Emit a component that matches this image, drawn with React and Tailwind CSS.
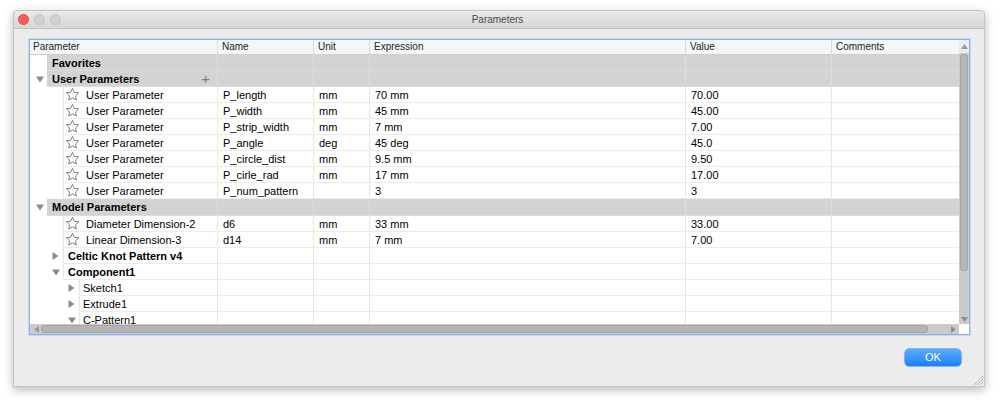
import React from "react";

const font = "font-['Liberation_Sans',Arial,sans-serif]";

const params = [
  ["User Parameter", "P_length", "mm", "70 mm", "70.00"],
  ["User Parameter", "P_width", "mm", "45 mm", "45.00"],
  ["User Parameter", "P_strip_width", "mm", "7 mm", "7.00"],
  ["User Parameter", "P_angle", "deg", "45 deg", "45.0"],
  ["User Parameter", "P_circle_dist", "mm", "9.5 mm", "9.50"],
  ["User Parameter", "P_cirle_rad", "mm", "17 mm", "17.00"],
  ["User Parameter", "P_num_pattern", "", "3", "3"],
];

const models = [
  ["Diameter Dimension-2", "d6", "mm", "33 mm", "33.00"],
  ["Linear Dimension-3", "d14", "mm", "7 mm", "7.00"],
];

function Star() {
  return (
    <svg width="15" height="15" viewBox="0 0 24 24" className="shrink-0">
      <path
        d="M12 2.2l2.95 6.3 6.85.85-5.05 4.7 1.35 6.8L12 17.45l-6.1 3.4 1.35-6.8-5.05-4.7 6.85-.85z"
        fill="#fff"
        stroke="#7c7c7c"
        strokeWidth="1.6"
        strokeLinejoin="round"
      />
    </svg>
  );
}

function Tri({ dir }) {
  return dir === "down" ? (
    <svg width="8" height="7" viewBox="0 0 8 7">
      <polygon points="0,0.5 8,0.5 4,6.5" fill="#8b8b8b" />
    </svg>
  ) : (
    <svg width="7" height="8" viewBox="0 0 7 8">
      <polygon points="0.5,0 6.5,4 0.5,8" fill="#8b8b8b" />
    </svg>
  );
}

// the five columns after "Parameter"
function Rest({ gray, cells = ["", "", "", "", ""] }) {
  const widths = ["w-[96px]", "w-[56px]", "w-[316px]", "w-[146px]", "w-[128px]"];
  return widths.map((w, i) => (
    <div
      key={i}
      className={`${w} shrink-0 border-l pl-[5px] ${
        gray ? "border-[#dedede] border-b-[#dcdcdc] bg-[#d3d3d3]" : "border-[#e6e6e6] border-b-[#ececec]"
      } border-b`}
    >
      {cells[i]}
    </div>
  ));
}

function GroupRow({ label, open, plus, tall }) {
  return (
    <div className={`flex ${tall ? "h-[17px] leading-[17px]" : "h-[16px] leading-[16px]"}`}>
      <div className="flex w-[187px] shrink-0">
        <div className="flex w-[17px] shrink-0 items-center pl-[6px]">{open && <Tri dir="down" />}</div>
        <div className="flex flex-1 items-center justify-between border-b border-[#dcdcdc] bg-[#d3d3d3] pl-[5px] pr-[7px] font-bold">
          <span>{label}</span>
          {plus && <span className="text-[15px] font-normal text-[#7a7a7a]">+</span>}
        </div>
      </div>
      <Rest gray />
    </div>
  );
}

function ParamRow({ row }) {
  return (
    <div className="flex h-[16px] leading-[16px]">
      <div className="flex w-[187px] shrink-0">
        <div className="w-[33px] shrink-0" />
        <div className="flex flex-1 items-center gap-[6px] border-b border-l border-[#e6e6e6] border-b-[#ececec] pl-[1px]">
          <Star />
          <span>{row[0]}</span>
        </div>
      </div>
      <Rest cells={row.slice(1)} />
    </div>
  );
}

function TreeRow({ label, level, dir, bold }) {
  const indent = level === 1 ? "w-[33px] pl-[22px]" : "w-[49px] pl-[38px]";
  return (
    <div className="flex h-[16px] leading-[16px]">
      <div className="flex w-[187px] shrink-0">
        <div className={`${indent} flex shrink-0 items-center`}>
          <Tri dir={dir} />
        </div>
        <div
          className={`flex-1 border-b border-l border-[#e6e6e6] border-b-[#ececec] ${
            level === 1 ? "pl-[4px]" : "pl-[3px]"
          } ${bold ? "font-bold" : ""}`}
        >
          {label}
        </div>
      </div>
      <Rest />
    </div>
  );
}

function Header() {
  const cols = [
    ["Parameter", "w-[187px] pl-[3px]"],
    ["Name", "w-[96px] pl-[4px] border-l"],
    ["Unit", "w-[56px] pl-[4px] border-l"],
    ["Expression", "w-[316px] pl-[4px] border-l"],
    ["Value", "w-[146px] pl-[4px] border-l"],
    ["Comments", "w-[128px] pl-[4px] border-l"],
  ];
  return (
    <div className="flex h-[15px] shrink-0 border-b border-[#cfcfcf] bg-[#f6f6f6] text-[10px] leading-[14px] text-[#222]">
      {cols.map(([t, c]) => (
        <div key={t} className={`${c} shrink-0 border-[#dadada]`}>
          {t}
        </div>
      ))}
    </div>
  );
}

function VScroll() {
  return (
    <div className="flex w-[10px] shrink-0 flex-col bg-[#cbcbcb]">
      <div className="flex h-[13px] items-center justify-center bg-[#ececec]">
        <svg width="7" height="5" viewBox="0 0 7 5">
          <polygon points="0,5 7,5 3.5,0" fill="#9a9a9a" />
        </svg>
      </div>
      <div className="mx-[1px] mt-[1px] h-[217px] rounded-[3px] border border-[#a5a5a5] bg-[#b5b5b5]" />
      <div className="flex-1" />
      <div className="flex h-[10px] items-center justify-center">
        <svg width="7" height="5" viewBox="0 0 7 5">
          <polygon points="0,0 7,0 3.5,5" fill="#8f8f8f" />
        </svg>
      </div>
    </div>
  );
}

function HScroll() {
  return (
    <div className="flex h-[10px] shrink-0">
      <div className="flex w-[929px] items-center bg-[#cbcbcb]">
        <div className="flex w-[11px] justify-center pl-[2px]">
          <svg width="5" height="7" viewBox="0 0 5 7">
            <polygon points="5,0 5,7 0,3.5" fill="#9a9a9a" />
          </svg>
        </div>
        <div className="h-[8px] w-[887px] rounded-[3px] border border-[#a5a5a5] bg-[#b5b5b5]" />
        <div className="flex-1" />
        <div className="flex w-[12px] justify-center">
          <svg width="5" height="7" viewBox="0 0 5 7">
            <polygon points="0,0 0,7 5,3.5" fill="#8f8f8f" />
          </svg>
        </div>
      </div>
      <div className="w-[10px] bg-white" />
    </div>
  );
}

export default function App() {
  return (
    <div className={`h-[405px] w-[999px] bg-white pl-[13px] pt-[10px] ${font} text-[11px] text-black`}>
      <div className="flex h-[377px] w-[972px] flex-col rounded-t-[4px] border border-[#c4c4c4] bg-[#ececec] shadow-[0_3px_10px_rgba(0,0,0,0.28)]">
        {/* title bar */}
        <div className="relative flex h-[18px] shrink-0 items-center rounded-t-[4px] border-b border-[#c2c2c2] bg-gradient-to-b from-[#e9e9e9] to-[#d6d6d6]">
          <div className="flex gap-[5px] pl-[4px]">
            <div className="h-[11px] w-[11px] rounded-full border border-[#e2463f] bg-[#fc5f57]" />
            <div className="h-[11px] w-[11px] rounded-full border border-[#c4c4c4] bg-[#d2d2d2]" />
            <div className="h-[11px] w-[11px] rounded-full border border-[#c4c4c4] bg-[#d2d2d2]" />
          </div>
          <div className="flex-1 pr-[50px] text-center text-[10px] text-[#4b4b4b]">Parameters</div>
        </div>

        {/* table */}
        <div className="ml-[15px] mt-[10px] flex h-[296px] w-[941px] flex-col border border-[#8db4ea] shadow-[0_0_0_1px_#c3d8f5]">
          <div className="flex min-h-0 flex-1">
            <div className="flex w-[929px] flex-col overflow-hidden bg-white">
              <Header />
              <GroupRow label="Favorites" />
              <GroupRow label="User Parameters" open plus />
              {params.map((r) => (
                <ParamRow key={r[1]} row={r} />
              ))}
              <GroupRow label="Model Parameters" open tall />
              {models.map((r) => (
                <ParamRow key={r[1]} row={r} />
              ))}
              <TreeRow label="Celtic Knot Pattern v4" level={1} dir="right" bold />
              <TreeRow label="Component1" level={1} dir="down" bold />
              <TreeRow label="Sketch1" level={2} dir="right" />
              <TreeRow label="Extrude1" level={2} dir="right" />
              <TreeRow label="C-Pattern1" level={2} dir="down" />
            </div>
            <VScroll />
          </div>
          <HScroll />
        </div>

        {/* buttons */}
        <div className="flex justify-end pr-[23px] pt-[14px]">
          <button className="h-[17px] w-[56px] rounded-[4px] bg-gradient-to-b from-[#5aacff] to-[#1a7ff9] text-[11px] leading-[17px] text-white shadow-[0_0_0_0.5px_#2a7fe6]">
            OK
          </button>
        </div>

        <div className="flex flex-1 items-end justify-end">
          <svg width="10" height="10" viewBox="0 0 10 10" className="mb-[1px] mr-[1px]">
            <line x1="1" y1="10" x2="10" y2="1" stroke="#a8a8a8" strokeWidth="0.8" />
            <line x1="4" y1="10" x2="10" y2="4" stroke="#a8a8a8" strokeWidth="0.8" />
            <line x1="7" y1="10" x2="10" y2="7" stroke="#a8a8a8" strokeWidth="0.8" />
          </svg>
        </div>
      </div>
    </div>
  );
}
